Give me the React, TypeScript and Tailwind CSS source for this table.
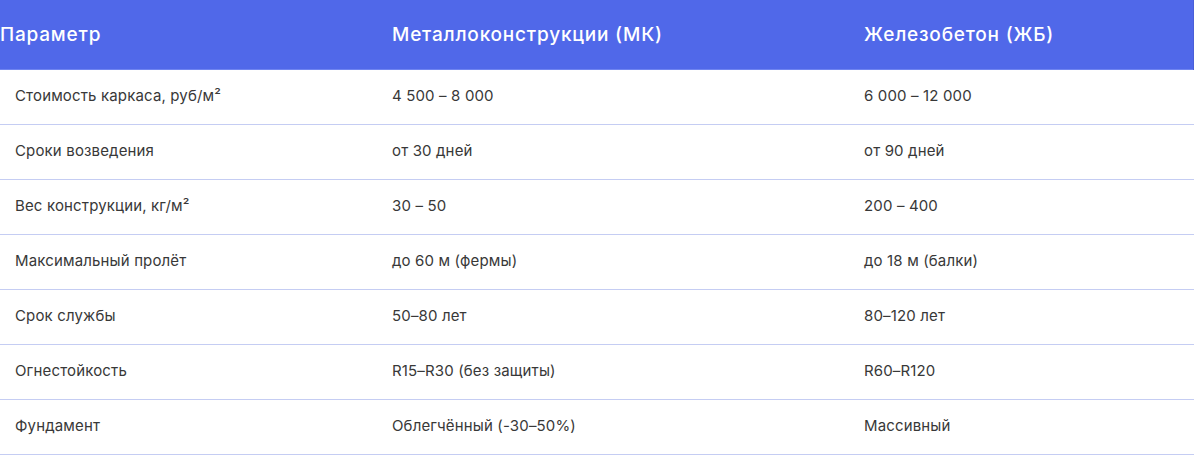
const rows: [string, string, string][] = [
  ["Стоимость каркаса, руб/м²", "4 500 – 8 000", "6 000 – 12 000"],
  ["Сроки возведения", "от 30 дней", "от 90 дней"],
  ["Вес конструкции, кг/м²", "30 – 50", "200 – 400"],
  ["Максимальный пролёт", "до 60 м (фермы)", "до 18 м (балки)"],
  ["Срок службы", "50–80 лет", "80–120 лет"],
  ["Огнестойкость", "R15–R30 (без защиты)", "R60–R120"],
  ["Фундамент", "Облегчённый (-30–50%)", "Массивный"],
];

export default function App() {
  return (
    <div className="w-[1200px] h-[461px] bg-white overflow-hidden font-['Inter',sans-serif]">
      <table className="w-[1194px] border-collapse table-fixed">
        <colgroup>
          <col className="w-[377px]" />
          <col className="w-[472px]" />
          <col />
        </colgroup>
        <thead>
          <tr className="h-[69px] bg-[#5068e9] text-white text-[19px] font-medium tracking-[0.8px] border-b border-[#6f84f0]">
            <th className="text-left font-medium pl-0 pr-[15px] pt-[2px]">Параметр</th>
            <th className="text-left font-medium px-[15px] pt-[2px]">Металлоконструкции (МК)</th>
            <th className="text-left font-medium px-[15px] pt-[2px] border-r border-[#4a5fd8]">Железобетон (ЖБ)</th>
          </tr>
        </thead>
        <tbody>
          {rows.map((r) => (
            <tr key={r[0]} className="h-[55px] border-b border-[#c5cdf3] text-[15px] tracking-[0.15px] text-[#383838]">
              {r.map((c, i) => (
                <td key={i} className="px-[15px]">
                  {c}
                </td>
              ))}
            </tr>
          ))}
        </tbody>
      </table>
    </div>
  );
}
